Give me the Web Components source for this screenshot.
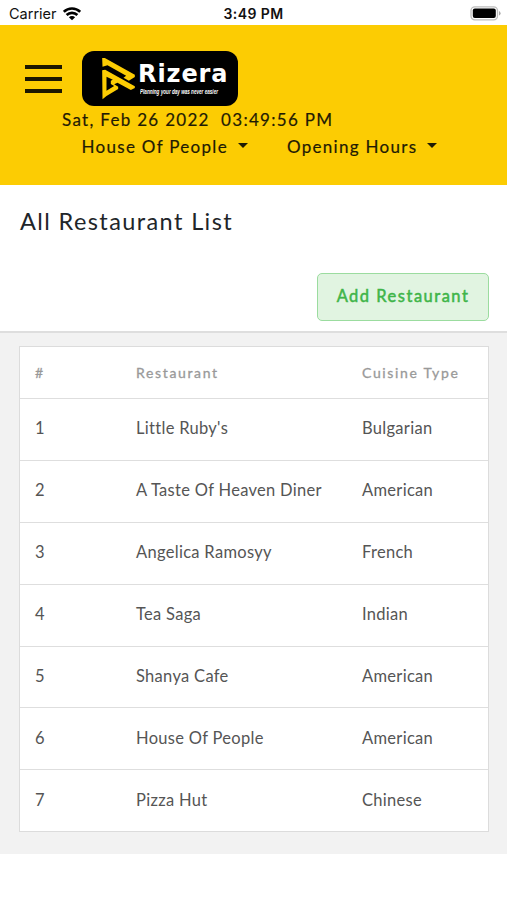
<!DOCTYPE html>
<html lang="en">
<head>
<meta charset="utf-8">
<meta name="viewport" content="width=device-width, initial-scale=1">
<title>All Restaurant List</title>
<style>
    body{
        margin: 0;
        background-color: white;
        font-family: Lato, "Liberation Sans", sans-serif;
        color: #212529;
    }
</style>
</head>
<body>
<status-bar carrier="Carrier" time="3:49 PM"></status-bar>
<app-header>
    <brand-logo slot="logo"></brand-logo>
    <span slot="date">Sat, Feb 26 2022&nbsp; 03:49:56 PM</span>
    <nav-dropdown slot="menu">House Of People</nav-dropdown>
    <nav-dropdown slot="menu">Opening Hours</nav-dropdown>
</app-header>
<page-title>
    All Restaurant List
    <add-button slot="action">Add Restaurant</add-button>
</page-title>
<restaurant-table></restaurant-table>

<script>
// Creates the open shadow root and fills it with the markup
function render(host, html){
    host.attachShadow({mode:"open"}).innerHTML = html;
}

class StatusBar extends HTMLElement{
    connectedCallback(){
        render(this, `
            <style>
                :host{
                    display: grid;
                    grid-template-columns: 1fr auto 1fr;
                    align-items: center;
                    height: 25px;
                    padding: 2px 6px 0 9px;
                    box-sizing: border-box;
                    font: 14.5px Inter, "Liberation Sans", sans-serif;
                    color: #111;
                }
                .left{
                    display: flex;
                    align-items: center;
                    gap: 6px;
                }
                .time{
                    margin-left: -3px;
                    font-weight: 600;
                    font-size: 14px;
                    letter-spacing: 0.4px;
                }
                .battery{
                    justify-self: end;
                }
                svg{
                    display: block;
                }
            </style>
            <div class="left">
                <span id="carrier"></span>
                <svg width="18" height="14" viewBox="0 0 18 14" fill="none" stroke="#000" stroke-width="2.6">
                    <path d="M.8 4.8a11.8 11.8 0 0 1 16.4 0M3.6 8a7.8 7.8 0 0 1 10.8 0"/>
                    <path d="M5.9 10.2a4.4 4.4 0 0 1 6.2 0L9 13.3z" fill="#000" stroke="none"/>
                </svg>
            </div>
            <span class="time" id="time"></span>
            <svg class="battery" width="31" height="15" viewBox="0 0 31 15">
                <rect x="1" y=".8" width="26.5" height="13" rx="3.8" fill="#fff" stroke="#bdbdbd" stroke-width="1.3"/>
                <rect x="2.8" y="2.5" width="23" height="9.6" rx="2" fill="#000"/>
                <path d="M29 5v4.6q1.6-.7 1.6-2.3T29 5z" fill="#aaa"/>
            </svg>
        `);
        this.shadowRoot.getElementById("carrier").textContent = this.getAttribute("carrier");
        this.shadowRoot.getElementById("time").textContent = this.getAttribute("time");
    }
}

class BrandLogo extends HTMLElement{
    connectedCallback(){
        render(this, `
            <style>
                :host{
                    display: flex;
                    width: 156px;
                    height: 55px;
                    background-color: #000;
                    border-radius: 12px;
                    color: white;
                    -webkit-text-stroke: 0;
                }
                svg{
                    display: block;
                    flex: none;
                }
                .text{
                    padding: 12px 0 0 1px;
                }
                .name{
                    font: 700 24px "DejaVu Sans", sans-serif;
                    line-height: 23px;
                    letter-spacing: 0.9px;
                }
                .tagline{
                    margin-left: 2px;
                    width: 98px;
                    font: italic 700 8px "Liberation Sans Narrow", "Liberation Sans", sans-serif;
                    line-height: 11px;
                    letter-spacing: 0;
                    white-space: nowrap;
                    transform: scaleX(0.575);
                    transform-origin: 0 0;
                }
            </style>
            <svg width="55" height="55" viewBox="0 0 55 55">
                <g fill="#fccc03" transform="translate(13.5 3) scale(.3333)">
                    <path d="M20 12L28 12 118 62V69L100 80 84 71 92 65 36 34 21 38z"/>
                    <path fill-rule="evenodd" d="M20 49L29 47 118 97V102L106 108 66 86 56 91 68 98V105L33 126 21 136zM33 68V110L56 96 46 90V80L52 77z"/>
                </g>
            </svg>
            <div class="text">
                <div class="name">Rizera</div>
                <div class="tagline">Planning your day was never easier</div>
            </div>
        `);
    }
}

class NavDropdown extends HTMLElement{
    connectedCallback(){
        render(this, `
            <style>
                :host{
                    display: flex;
                    align-items: center;
                    gap: 10px;
                }
                .caret{
                    border: 5px solid transparent;
                    border-top-color: currentColor;
                    border-bottom: 0;
                    margin-top: -3px;
                }
            </style>
            <span><slot></slot></span>
            <span class="caret"></span>
        `);
    }
}

class AppHeader extends HTMLElement{
    connectedCallback(){
        render(this, `
            <style>
                :host{
                    display: block;
                    height: 160px;
                    box-sizing: border-box;
                    padding: 26px 25px 0;
                    background-color: #fccc03;
                    color: #1f1b04;
                    font-size: 17px;
                    line-height: 27px;
                    letter-spacing: 1.3px;
                    -webkit-text-stroke: 0.2px;
                }
                .top{
                    display: flex;
                    align-items: center;
                    gap: 20px;
                }
                .burger{
                    display: flex;
                    flex-direction: column;
                    gap: 8px;
                    width: 37px;
                }
                .burger i{
                    height: 4px;
                    background-color: #1c1700;
                }
                .date{
                    padding-left: 37px;
                    white-space: pre;
                }
                .menu{
                    display: flex;
                    gap: 39px;
                    padding-left: 56.5px;
                }
            </style>
            <div class="top">
                <div class="burger"><i></i><i></i><i></i></div>
                <slot name="logo"></slot>
            </div>
            <div class="date"><slot name="date"></slot></div>
            <div class="menu"><slot name="menu"></slot></div>
        `);
    }
}

class PageTitle extends HTMLElement{
    connectedCallback(){
        render(this, `
            <style>
                :host{
                    display: flex;
                    flex-direction: column;
                    height: 148px;
                    box-sizing: border-box;
                    padding: 18px 18px 0 20px;
                    border-bottom: 2px solid #dedede;
                }
                h1{
                    margin: 0 0 34px;
                    font-size: 23.5px;
                    line-height: 36px;
                    font-weight: 400;
                    letter-spacing: 1.4px;
                }
                .action{
                    display: flex;
                    justify-content: flex-end;
                }
            </style>
            <h1><slot></slot></h1>
            <div class="action"><slot name="action"></slot></div>
        `);
    }
}

class AddButton extends HTMLElement{
    connectedCallback(){
        render(this, `
            <style>
                :host{
                    display: block;
                }
                button{
                    display: block;
                    width: 172px;
                    height: 48px;
                    padding: 0 0 3px;
                    border: 1px solid #9bdc9f;
                    border-radius: 5px;
                    background-color: #e1f4e1;
                    color: #3fb549;
                    font: 400 16.5px Lato, sans-serif;
                    letter-spacing: 1.5px;
                    -webkit-text-stroke: 0.5px;
                }
            </style>
            <button><slot></slot></button>
        `);
    }
}

class RestaurantTable extends HTMLElement{
    connectedCallback(){
        const rows = [
            ["Little Ruby's", "Bulgarian"],
            ["A Taste Of Heaven Diner", "American"],
            ["Angelica Ramosyy", "French"],
            ["Tea Saga", "Indian"],
            ["Shanya Cafe", "American"],
            ["House Of People", "American"],
            ["Pizza Hut", "Chinese"]
        ];
        render(this, `
            <style>
                :host{
                    display: block;
                    padding: 13px 18px 22px 19px;
                    background-color: #f2f2f2;
                }
                .table{
                    border: 1px solid #dcdcdc;
                    background-color: white;
                    color: #555;
                    font-size: 16.5px;
                    letter-spacing: 0.3px;
                }
                .row{
                    display: grid;
                    grid-template-columns: 101px 226px 1fr;
                    align-items: center;
                    height: 61.9px;
                    padding: 0 0 2px 15px;
                    box-sizing: border-box;
                    border-top: 1.5px solid #dedede;
                }
                .head{
                    height: 51px;
                    padding-bottom: 1px;
                    border-top: 0;
                    color: #999;
                    font-size: 14px;
                    letter-spacing: 1.65px;
                    -webkit-text-stroke: 0.3px;
                }
            </style>
            <div class="table">
                <div class="row head"><span>#</span><span>Restaurant</span><span>Cuisine Type</span></div>
                ${rows.map((r, i) => `<div class="row"><span>${i + 1}</span><span>${r[0]}</span><span>${r[1]}</span></div>`).join("")}
            </div>
        `);
    }
}

customElements.define("status-bar", StatusBar);
customElements.define("brand-logo", BrandLogo);
customElements.define("nav-dropdown", NavDropdown);
customElements.define("app-header", AppHeader);
customElements.define("page-title", PageTitle);
customElements.define("add-button", AddButton);
customElements.define("restaurant-table", RestaurantTable);
</script>
</body>
</html>
